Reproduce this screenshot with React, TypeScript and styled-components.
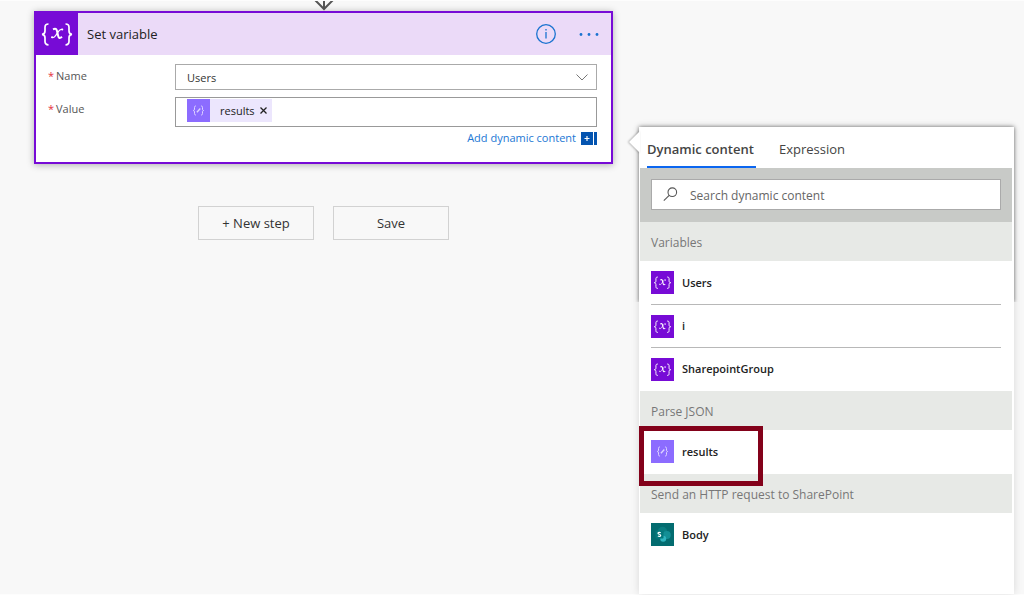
import React from "react";
import styled, { createGlobalStyle, css } from "styled-components";

const GlobalStyle = createGlobalStyle`
  *, *::before, *::after { box-sizing: border-box; }
  body {
    margin: 0;
    background: #f8f8f8;
    color: #333;
    font-family: "Open Sans", "Noto Sans", sans-serif;
    font-size: 12px;
    line-height: 16px;
  }
  button, input, select { font: inherit; color: inherit; }
  ul { list-style: none; margin: 0; padding: 0; }
`;

const Page = styled.div`
  display: flex;
  gap: 26px;
  min-height: 100vh;
  padding: 0 10px 0 34px;
  border-top: 1px solid #fdfdfd;
  border-bottom: 1px solid #fdfdfd;
`;

const Flow = styled.main`
  flex: 1 1 0;
  min-width: 0;
  display: flex;
  flex-direction: column;
  align-items: center;
`;

const Connector = styled.svg`
  display: block;
  width: 20px;
  height: 10px;
`;

const Card = styled.section`
  width: 100%;
  background: #fff;
  border: 2px solid #770bd6;
  box-shadow: 0 1px 7px rgba(0, 0, 0, 0.3);
`;

const CardHeader = styled.header`
  display: flex;
  align-items: center;
  height: 42px;
  padding-right: 11px;
  background: #ebdaf8;
`;

const CardIcon = styled.span`
  width: 42px;
  height: 42px;
  flex: none;
  background: #770bd6;
`;

const CardTitle = styled.h1`
  flex: 1;
  margin: 0 0 0 9px;
  font-size: 13px;
  line-height: 16px;
  font-weight: 400;
  color: #222;
`;

const IconButton = styled.button`
  display: flex;
  margin-left: 21px;
  padding: 0;
  border: 0;
  background: none;
  color: #1a73d0;
  cursor: pointer;
`;

const Form = styled.div`
  display: flex;
  flex-direction: column;
  gap: 7px;
  padding: 9px 14px 16px 12px;
`;

const Field = styled.div`
  display: flex;
`;

const Label = styled.label`
  flex: none;
  width: 127px;
  padding-top: 4px;
  font-size: 11px;
  color: #555;
`;

const Required = styled.span`
  margin-right: 2px;
  color: #e5303b;
`;

const SelectWrap = styled.div`
  flex: 1;
  display: grid;
  align-items: center;

  > * { grid-area: 1 / 1; }
  > svg { justify-self: end; margin-right: 8px; pointer-events: none; }
`;

const Select = styled.select`
  width: 100%;
  height: 26px;
  padding: 1px 30px 0 11px;
  appearance: none;
  border: 1px solid #aaa;
  border-radius: 0;
  background: #fff;
  font-size: 11px;
`;

const TokenBox = styled.div`
  flex: 1;
  height: 30px;
  padding: 1px 11px;
  border: 1px solid #999;
`;

const Token = styled.span`
  display: inline-flex;
  align-items: center;
  height: 23px;
  padding-right: 4px;
  background: #ece6fd;
  color: #222;
  font-size: 11px;
`;

const TokenText = styled.span`
  margin: 0 4px 0 10px;
`;

const RemoveButton = styled.button`
  display: flex;
  padding: 0;
  border: 0;
  background: none;
  cursor: pointer;
`;

const AddLink = styled.a`
  display: flex;
  align-items: center;
  align-self: flex-end;
  gap: 5px;
  margin-top: -4px;
  font-size: 11px;
  color: #2277d4;
  text-decoration: none;
`;

const Actions = styled.div`
  display: flex;
  gap: 19px;
  margin-top: 42px;
`;

const ActionButton = styled.button`
  width: 116px;
  height: 34px;
  padding: 0;
  border: 1px solid #d2d2d2;
  background: #f8f8f8;
  font-size: 13px;
  cursor: pointer;
`;

const Panel = styled.aside`
  position: relative;
  z-index: 0;
  flex: 0 1 375px;
  margin-top: 126px;
  padding: 0 2px 0 1px;
  background: #fff;
  box-shadow: 0 0 8px rgba(0, 0, 0, 0.13);

  &::before {
    content: "";
    position: absolute;
    inset: 0 0 auto;
    z-index: -1;
    height: 175px;
    background: #fff;
    box-shadow: 0 0 4px rgba(0, 0, 0, 0.55);
    clip-path: inset(-8px -8px 0 -8px);
  }
`;

const Pointer = styled.svg`
  position: absolute;
  top: 3px;
  left: -11px;
  filter: drop-shadow(-1px 0 1px rgba(0, 0, 0, 0.3));
`;

const Tabs = styled.div`
  display: flex;
  gap: 23px;
  height: 41px;
  padding-left: 7px;
`;

const Tab = styled.button<{ $active?: boolean }>`
  padding: 4px 0 0;
  border: 0;
  border-bottom: 2px solid transparent;
  background: none;
  font-size: 13px;
  color: #444;
  cursor: pointer;
  ${(p) =>
    p.$active &&
    css`
      width: 109px;
      text-align: left;
      border-color: #0b66f0;
      font-weight: 600;
    `}
`;

const SearchBand = styled.div`
  padding: 11px 11px 12px;
  background: #c8cac7;
`;

const SearchBox = styled.label`
  display: flex;
  align-items: center;
  gap: 12px;
  height: 31px;
  padding-left: 11px;
  border: 1px solid #aaa;
  background: #fff;
`;

const SearchInput = styled.input`
  flex: 1;
  min-width: 0;
  height: 100%;
  padding: 1px 0 0;
  border: 0;
  outline: 0;
  background: none;
  font-size: 12px;
  &::placeholder { color: #666; opacity: 1; }
`;

const Groups = styled.div`
  display: flex;
  flex-direction: column;
  gap: 1px;
`;

const GroupTitle = styled.h2`
  height: 39px;
  margin: 0;
  padding: 0 11px;
  background: #e7e9e6;
  color: #777;
  font-size: 12px;
  line-height: 41px;
  font-weight: 400;
`;

const Item = styled.li`
  position: relative;
  height: 43px;
  margin: 0 11px;
  & + & { border-top: 1px solid #b8b8b8; }
`;

const ItemButton = styled.button`
  display: flex;
  align-items: center;
  gap: 8px;
  width: 100%;
  height: 100%;
  padding: 0;
  border: 0;
  background: none;
  color: #222;
  font-size: 11px;
  font-weight: 600;
  text-align: left;
  cursor: pointer;
`;

const Highlight = styled.span`
  position: absolute;
  top: -4px;
  left: -12px;
  width: 124px;
  height: 60px;
  border: 5px solid #83011a;
  z-index: 1;
  pointer-events: none;
`;

const VariableIcon = ({ size = 23 }: { size?: number }) => (
  <svg width={size} height={size} viewBox="0 0 42 42" fill="none" stroke="#fff" strokeWidth="1.700" aria-hidden="true">
    <rect width="42" height="42" fill="#770bd6" stroke="none" />
    <path d="M12.500 11C9.600 11 9 12.200 9 14.300V18c0 2-.8 3.200-3 3.400 2.200.2 3 1.400 3 3.400v3.700c0 2.100.6 3.300 3.500 3.300M29.500 11c2.900 0 3.500 1.200 3.500 3.300V18c0 2 .8 3.200 3 3.400-2.200.2-3 1.400-3 3.400v3.700c0 2.100-.6 3.300-3.500 3.300" />
    <path d="M17 16.300c2.600-1.300 3.500-.2 4 1.700l1.200 5c.5 2 1.500 2.900 3.800.8" strokeWidth="2" />
    <path d="M26.500 16.600c-1.600-.9-3 .2-4.200 2l-2.500 3.800c-1.200 1.800-2.400 2.800-4 1.900" strokeWidth="1.200" />
    <path d="M26.200 16.500h.1M16 24.300h.1" strokeWidth="2" strokeLinecap="round" />
  </svg>
);

const ParseIcon = () => (
  <svg width="23" height="23" viewBox="0 0 23 23" fill="none" stroke="#ddd3ff" aria-hidden="true">
    <rect width="23" height="23" fill="#8c6cff" stroke="none" />
    <path d="M9 7C7.700 7 7.500 7.600 7.500 8.400v1.700c0 .8-.3 1.300-1.200 1.400.9.1 1.200.6 1.200 1.400v1.700c0 .8.2 1.400 1.500 1.400M14 7c1.300 0 1.500.6 1.500 1.400v1.700c0 .8.3 1.300 1.200 1.400-.9.1-1.200.6-1.200 1.400v1.700c0 .8-.2 1.400-1.500 1.400" />
    <path d="M9.900 13.200l3.400-3.600" strokeWidth="1.400" />
  </svg>
);

const SharePointIcon = () => (
  <svg width="23" height="23" viewBox="0 0 23 23" aria-hidden="true">
    <rect width="23" height="23" fill="#036c70" />
    <circle cx="11.500" cy="8.500" r="4.700" fill="#0a7d81" />
    <circle cx="15.800" cy="12" r="4" fill="#138f95" />
    <circle cx="12.200" cy="15.700" r="3" fill="#2fb5bf" />
    <rect x="4.500" y="7.500" width="8" height="8" rx=".7" fill="#04787c" />
    <path d="M9.700 9.700c-1-.6-2.700-.5-2.700.6 0 1.200 2.700.8 2.700 2.100 0 1.100-1.700 1.200-2.800.6" fill="none" stroke="#fff" strokeWidth="1.200" />
  </svg>
);

type Entry = { name: string; icon: React.ReactNode; highlighted?: boolean };

const groups: { title: string; items: Entry[] }[] = [
  {
    title: "Variables",
    items: ["Users", "i", "SharepointGroup"].map((name) => ({ name, icon: <VariableIcon /> })),
  },
  { title: "Parse JSON", items: [{ name: "results", icon: <ParseIcon />, highlighted: true }] },
  { title: "Send an HTTP request to SharePoint", items: [{ name: "Body", icon: <SharePointIcon /> }] },
];

export default function App() {
  return (
    <>
      <GlobalStyle />
      <Page>
        <Flow>
          <Connector viewBox="0 0 20 10" fill="none" stroke="#555" strokeWidth="2" aria-hidden="true">
            <path d="M10 0v8M1 -1l9 9 9-9" />
          </Connector>
          <Card>
            <CardHeader>
              <CardIcon><VariableIcon size={42} /></CardIcon>
              <CardTitle>Set variable</CardTitle>
              <IconButton type="button" aria-label="Information">
                <svg width="22" height="22" viewBox="0 0 22 22" fill="none" stroke="currentColor" strokeWidth="1.300">
                  <circle cx="11" cy="11" r="9.300" />
                  <path d="M11 9v6.500M11 6v1.600" />
                </svg>
              </IconButton>
              <IconButton type="button" aria-label="More commands">
                <svg width="22" height="22" viewBox="0 0 22 22" fill="currentColor">
                  <circle cx="3" cy="11.500" r="1.400" />
                  <circle cx="11" cy="11.500" r="1.400" />
                  <circle cx="19" cy="11.500" r="1.400" />
                </svg>
              </IconButton>
            </CardHeader>
            <Form>
              <Field>
                <Label htmlFor="variable-name"><Required>*</Required>Name</Label>
                <SelectWrap>
                  <Select id="variable-name" defaultValue="Users">
                    <option>Users</option>
                    <option>i</option>
                    <option>SharepointGroup</option>
                  </Select>
                  <svg width="14" height="14" viewBox="0 0 14 14" fill="none" stroke="#777" aria-hidden="true">
                    <path d="M1.500 4.500L7 10l5.500-5.500" />
                  </svg>
                </SelectWrap>
              </Field>
              <Field>
                <Label as="span" id="value-label"><Required>*</Required>Value</Label>
                <TokenBox role="textbox" tabIndex={0} aria-labelledby="value-label">
                  <Token>
                    <ParseIcon />
                    <TokenText>results</TokenText>
                    <RemoveButton type="button" aria-label="Remove results">
                      <svg width="9" height="9" viewBox="0 0 9 9" stroke="#222" strokeWidth="1.300">
                        <path d="M1.500 1.500l6 6M7.500 1.500l-6 6" />
                      </svg>
                    </RemoveButton>
                  </Token>
                </TokenBox>
              </Field>
              <AddLink href="#dynamic-content">
                Add dynamic content
                <svg width="16" height="13" viewBox="0 0 16 13" aria-hidden="true">
                  <path fill="#0454b0" d="M0 0h12v13H0zM13 0h3v13h-3z" />
                  <path stroke="#fff" strokeWidth="1.200" d="M6 4v5M3.500 6.500h5" />
                </svg>
              </AddLink>
            </Form>
          </Card>
          <Actions>
            <ActionButton type="button">+ New step</ActionButton>
            <ActionButton type="button">Save</ActionButton>
          </Actions>
        </Flow>
        <Panel id="dynamic-content">
          <Pointer width="12" height="24" viewBox="0 0 12 24" aria-hidden="true">
            <path d="M12 1L1 12l11 11z" fill="#fff" />
          </Pointer>
          <Tabs role="tablist">
            <Tab type="button" role="tab" aria-selected="true" $active>Dynamic content</Tab>
            <Tab type="button" role="tab" aria-selected="false">Expression</Tab>
          </Tabs>
          <SearchBand>
            <SearchBox>
              <svg width="15" height="15" viewBox="0 0 15 15" fill="none" stroke="#555" strokeWidth="1.100" aria-hidden="true">
                <circle cx="9.300" cy="5.200" r="4.300" />
                <path d="M6.200 8.300L.8 13.700" />
              </svg>
              <SearchInput type="text" aria-label="Search dynamic content" placeholder="Search dynamic content" />
            </SearchBox>
          </SearchBand>
          <Groups>
            {groups.map((group) => (
              <section key={group.title}>
                <GroupTitle>{group.title}</GroupTitle>
                <ul>
                  {group.items.map((item) => (
                    <Item key={item.name}>
                      <ItemButton type="button">
                        {item.icon}
                        <span>{item.name}</span>
                      </ItemButton>
                      {item.highlighted && <Highlight />}
                    </Item>
                  ))}
                </ul>
              </section>
            ))}
          </Groups>
        </Panel>
      </Page>
    </>
  );
}
